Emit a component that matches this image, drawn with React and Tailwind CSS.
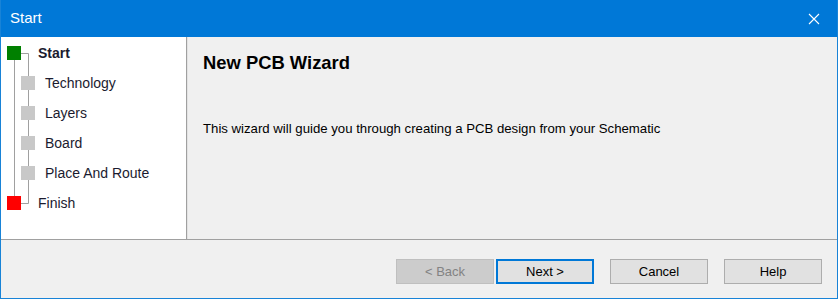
import React from 'react';

const steps = [
  { label: 'Start', color: 'bg-[#008000]', bold: true, child: false },
  { label: 'Technology', color: 'bg-[#c8c8c8]', child: true },
  { label: 'Layers', color: 'bg-[#c8c8c8]', child: true },
  { label: 'Board', color: 'bg-[#c8c8c8]', child: true },
  { label: 'Place And Route', color: 'bg-[#c8c8c8]', child: true },
  { label: 'Finish', color: 'bg-[#ff0000]', child: false },
];

const Button = ({ children, disabled, focused }) => (
  <button
    disabled={disabled}
    className={`w-[98px] h-[25px] text-[13px] leading-none border
      ${disabled ? 'bg-[#cccccc] border-[#bfbfbf] text-[#838383]' : 'bg-[#e1e1e1] text-black'}
      ${focused ? 'border-2 border-[#0078d7]' : ''}
      ${!disabled && !focused ? 'border-[#adadad]' : ''}
    `}
  >
    {children}
  </button>
);

const App = () => {
  return (
    <div
      className="w-[838px] h-[299px] flex flex-col bg-[#f0f0f0] border-x border-b border-[#1883d7] overflow-hidden"
      style={{ fontFamily: '"Liberation Sans", Arial, sans-serif' }}
    >
      {/* title bar */}
      <div className="h-[37px] -mx-px flex items-center justify-between bg-[#0078d7] text-white flex-shrink-0">
        <span className="pl-[10px] text-[15px]">Start</span>
        <svg width="12" height="12" viewBox="0 0 12 12" className="mr-[18px] mt-[1px]">
          <path d="M1 1 L11 11 M11 1 L1 11" stroke="white" strokeWidth="1.1" />
        </svg>
      </div>

      <div className="flex h-[203px] border-b border-[#a0a0a0] flex-shrink-0">
        {/* step tree */}
        <div className="relative w-[186px] bg-white pt-[1px] border-r border-[#a0a0a0] flex-shrink-0">
          <svg className="absolute left-0 top-0" width="40" height="203">
            <path d="M13.5 23 V159" stroke="#a0a0a0" strokeWidth="1" />
            <path d="M20 16.5 H27.5 V166.5 H20" stroke="#a0a0a0" strokeWidth="1" fill="none" />
          </svg>
          {steps.map((s) => (
            <div key={s.label} className="relative h-[30px] flex items-center">
              <div
                className={`w-[14px] h-[14px] ${s.color} ${s.child ? 'ml-[20px]' : 'ml-[6px]'}`}
              />
              <span
                className={`text-[14px] text-[#1b1b2f] ${s.child ? 'ml-[10px]' : 'ml-[17px]'} ${s.bold ? 'font-bold' : ''}`}
              >
                {s.label}
              </span>
            </div>
          ))}
        </div>
        <div className="w-px bg-[#e3e3e3] flex-shrink-0" />

        {/* content */}
        <div className="flex-1 pl-[15px] pt-[15px]">
          <h1 className="text-[18.4px] font-bold text-black leading-[22px]">New PCB Wizard</h1>
          <p className="mt-[45px] text-[13.2px] text-black">
            This wizard will guide you through creating a PCB design from your Schematic
          </p>
        </div>
      </div>

      {/* footer */}
      <div className="flex items-start pt-[19px] pl-[395px]">
        <Button disabled>&lt; Back</Button>
        <div className="ml-[2px]">
          <Button focused>Next &gt;</Button>
        </div>
        <div className="ml-[16px]">
          <Button>Cancel</Button>
        </div>
        <div className="ml-[16px]">
          <Button>Help</Button>
        </div>
      </div>
    </div>
  );
};

export default App;
